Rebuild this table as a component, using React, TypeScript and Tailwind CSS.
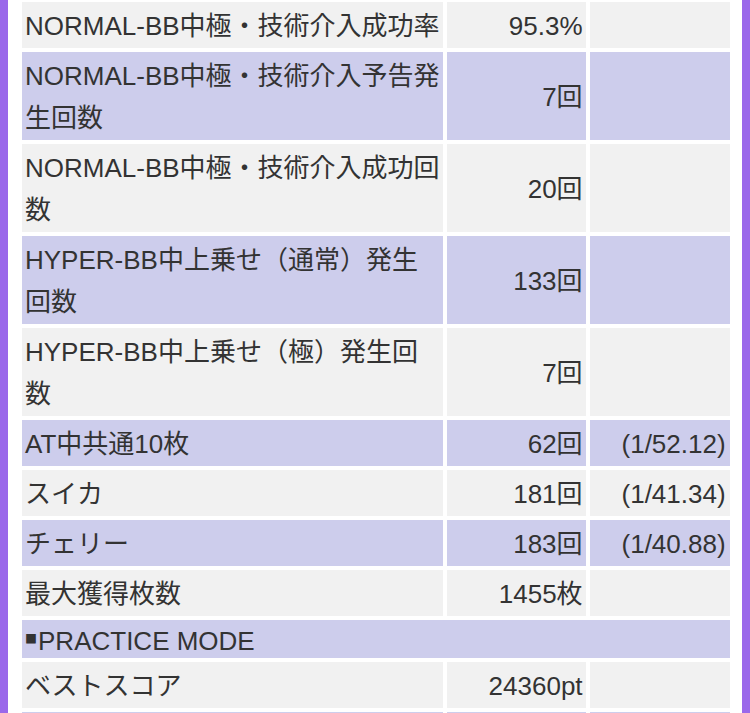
type Tone = "gray" | "lavender";

type StatRow =
  | {
      kind: "stat";
      label: string[];
      value: string;
      rate?: string;
      tone: Tone;
    }
  | {
      kind: "heading";
      label: string;
      tone: Tone;
    };

const rows: StatRow[] = [
  {
    kind: "stat",
    label: ["NORMAL-BB中極・技術介入成功率"],
    value: "95.3%",
    tone: "gray",
  },
  {
    kind: "stat",
    label: ["NORMAL-BB中極・技術介入予告発", "生回数"],
    value: "7回",
    tone: "lavender",
  },
  {
    kind: "stat",
    label: ["NORMAL-BB中極・技術介入成功回", "数"],
    value: "20回",
    tone: "gray",
  },
  {
    kind: "stat",
    label: ["HYPER-BB中上乗せ（通常）発生", "回数"],
    value: "133回",
    tone: "lavender",
  },
  {
    kind: "stat",
    label: ["HYPER-BB中上乗せ（極）発生回", "数"],
    value: "7回",
    tone: "gray",
  },
  {
    kind: "stat",
    label: ["AT中共通10枚"],
    value: "62回",
    rate: "(1/52.12)",
    tone: "lavender",
  },
  {
    kind: "stat",
    label: ["スイカ"],
    value: "181回",
    rate: "(1/41.34)",
    tone: "gray",
  },
  {
    kind: "stat",
    label: ["チェリー"],
    value: "183回",
    rate: "(1/40.88)",
    tone: "lavender",
  },
  { kind: "stat", label: ["最大獲得枚数"], value: "1455枚", tone: "gray" },
  { kind: "heading", label: "PRACTICE MODE", tone: "lavender" },
  { kind: "stat", label: ["ベストスコア"], value: "24360pt", tone: "gray" },
  { kind: "stat", label: [""], value: "", tone: "lavender" },
];

const toneClass = (tone: Tone) =>
  tone === "gray" ? "bg-[#f1f1f1]" : "bg-[#cdcdec]";

export default function App() {
  return (
    <div
      className="min-h-screen overflow-hidden border-x-8 border-[#9a68ea] bg-white px-[14px] pt-[2px] text-[26px] text-[#333]"
      style={{ fontFamily: '"Liberation Sans", "Noto Sans CJK JP", sans-serif' }}
    >
      <div className="grid grid-cols-[1fr_139px_140px] gap-[4px]">
        {rows.map((row, i) =>
          row.kind === "heading" ? (
            <div
              key={i}
              className={`col-span-3 h-[38px] px-[3px] leading-[38px] whitespace-nowrap ${toneClass(row.tone)}`}
            >
              <span
                className="mr-[1px] align-[6px] text-[12px]"
                style={{ fontFamily: '"Noto Sans CJK JP", sans-serif' }}
              >
                ■
              </span>
              {row.label}
            </div>
          ) : (
            <div key={i} className="contents">
              <div
                className={`px-[3px] pt-[3px] pb-[1px] leading-[42px] whitespace-nowrap ${toneClass(row.tone)}`}
              >
                {row.label.map((line, j) => (
                  <div key={j}>{line || "\u00a0"}</div>
                ))}
              </div>
              <div
                className={`flex items-center justify-end px-[3px] pt-[3px] pb-[1px] leading-[42px] whitespace-nowrap ${toneClass(row.tone)}`}
              >
                {row.value}
              </div>
              <div
                className={`flex items-center justify-end pr-[4px] pt-[3px] pb-[1px] leading-[42px] whitespace-nowrap ${toneClass(row.tone)}`}
              >
                {row.rate ?? ""}
              </div>
            </div>
          )
        )}
      </div>
    </div>
  );
}
